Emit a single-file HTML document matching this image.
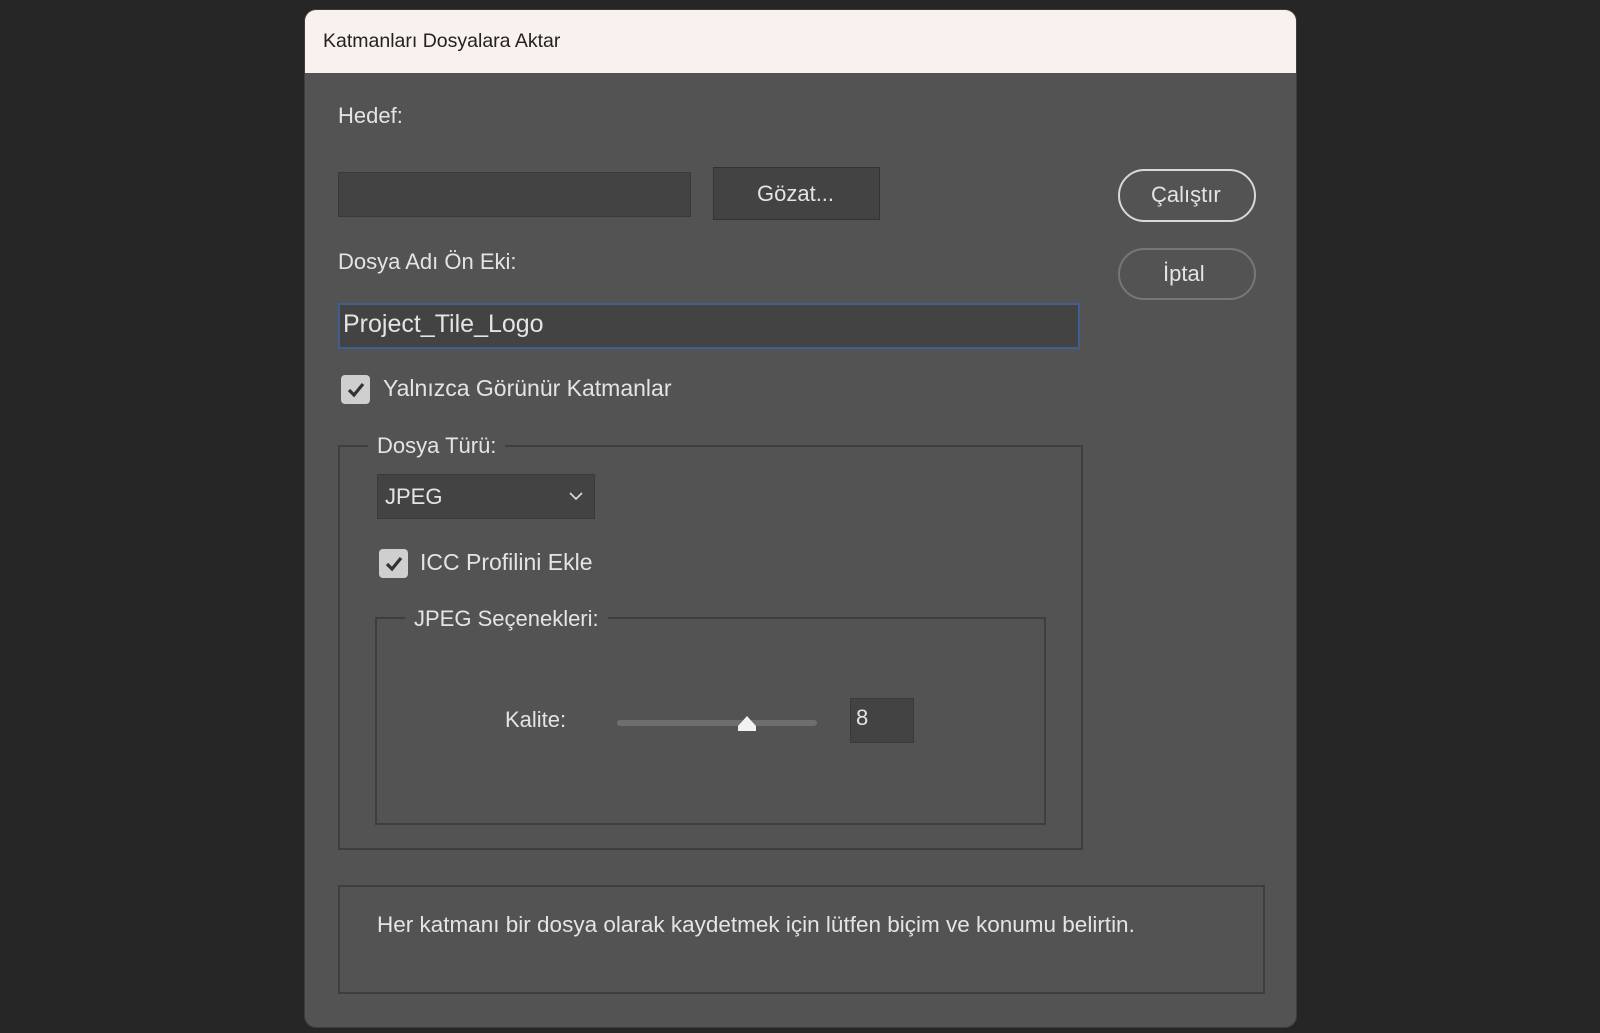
<!DOCTYPE html>
<html><head><meta charset="utf-8"><style>
*{box-sizing:border-box;margin:0;padding:0}
body{width:1600px;height:1033px;background:#262626;position:relative;overflow:hidden;font-family:"Liberation Sans",sans-serif;color:#e4e4e4}
.a{position:absolute}
.t{position:absolute;white-space:nowrap;font-size:22px;line-height:26px;transform-origin:left center}
#dlg{left:304px;top:9px;width:993px;height:1019px;background:#535353;border-radius:12px;overflow:hidden;border:1px solid #3d3d3d}
#title{left:0;top:0;width:100%;height:63px;background:#f9f1ed}
.inp{background:#434343;border:1px solid #3a3a3a}
.fs{border:2px solid #3e3e3e}
.leg{background:#535353;padding:0 9px}
.btn{border:2px solid #d8d8d8;border-radius:27px}
.cb{background:#cfcfcf;border-radius:4px}
</style></head><body>
<div id="dlg" class="a">
<div id="title" class="a"></div>
</div>
<div class="t" style="left:323px;top:28px;font-size:19.5px;color:#222;">Katmanları Dosyalara Aktar</div>

<div class="t" style="left:338px;top:103px;">Hedef:</div>
<div class="a inp" style="left:338px;top:172px;width:353px;height:45px;"></div>
<div class="a inp" style="left:713px;top:167px;width:167px;height:53px;border-color:#333"></div>
<div class="t" style="left:757px;top:181px;">Gözat...</div>

<div class="a btn" style="left:1118px;top:169px;width:138px;height:53px;"></div>
<div class="t" style="left:1151px;top:182px;">Çalıştır</div>
<div class="a btn" style="left:1118px;top:248px;width:138px;height:52px;border-color:#777"></div>
<div class="t" style="left:1163px;top:261px;">İptal</div>

<div class="t" style="left:338px;top:249px;">Dosya Adı Ön Eki:</div>
<div class="a inp" style="left:338px;top:303px;width:742px;height:46px;border:2px solid #3f5f8f;"></div>
<div class="t" style="left:343px;top:310px;font-size:25px;line-height:28px;">Project_Tile_Logo</div>

<div class="a cb" style="left:341px;top:375px;width:29px;height:29px;"></div>
<svg class="a" style="left:341px;top:375px" width="29" height="29"><path d="M8 15 L13 20 L22 9" stroke="#333" stroke-width="3.2" fill="none"/></svg>
<div class="t" style="left:383px;top:375px;font-size:23px;">Yalnızca Görünür Katmanlar</div>

<div class="a fs" style="left:338px;top:445px;width:745px;height:405px;"></div>
<div class="t leg" style="left:368px;top:433px;">Dosya Türü:</div>
<div class="a inp" style="left:377px;top:474px;width:218px;height:45px;"></div>
<div class="t" style="left:385px;top:484px;">JPEG</div>
<svg class="a" style="left:568px;top:490px" width="16" height="12"><path d="M2 3 L8 9 L14 3" stroke="#ddd" stroke-width="1.6" fill="none"/></svg>

<div class="a cb" style="left:379px;top:549px;width:29px;height:29px;"></div>
<svg class="a" style="left:379px;top:549px" width="29" height="29"><path d="M8 15 L13 20 L22 9" stroke="#333" stroke-width="3.2" fill="none"/></svg>
<div class="t" style="left:420px;top:549px;font-size:23px;">ICC Profilini Ekle</div>

<div class="a fs" style="left:375px;top:617px;width:671px;height:208px;"></div>
<div class="t leg" style="left:405px;top:606px;">JPEG Seçenekleri:</div>
<div class="t" style="left:505px;top:707px;">Kalite:</div>
<div class="a" style="left:617px;top:720px;width:200px;height:6px;background:#6e6e6e;border-radius:3px;"></div>
<svg class="a" style="left:736px;top:714px" width="22" height="18"><path d="M2 17 L2 12 L11 2 L20 12 L20 17 Z" fill="#f2f2f2"/></svg>
<div class="a inp" style="left:850px;top:698px;width:64px;height:45px;"></div>
<div class="t" style="left:856px;top:705px;">8</div>

<div class="a fs" style="left:338px;top:885px;width:927px;height:109px;"></div>
<div class="t" style="left:377px;top:912px;font-size:22.5px;">Her katmanı bir dosya olarak kaydetmek için lütfen biçim ve konumu belirtin.</div>
</body></html>
